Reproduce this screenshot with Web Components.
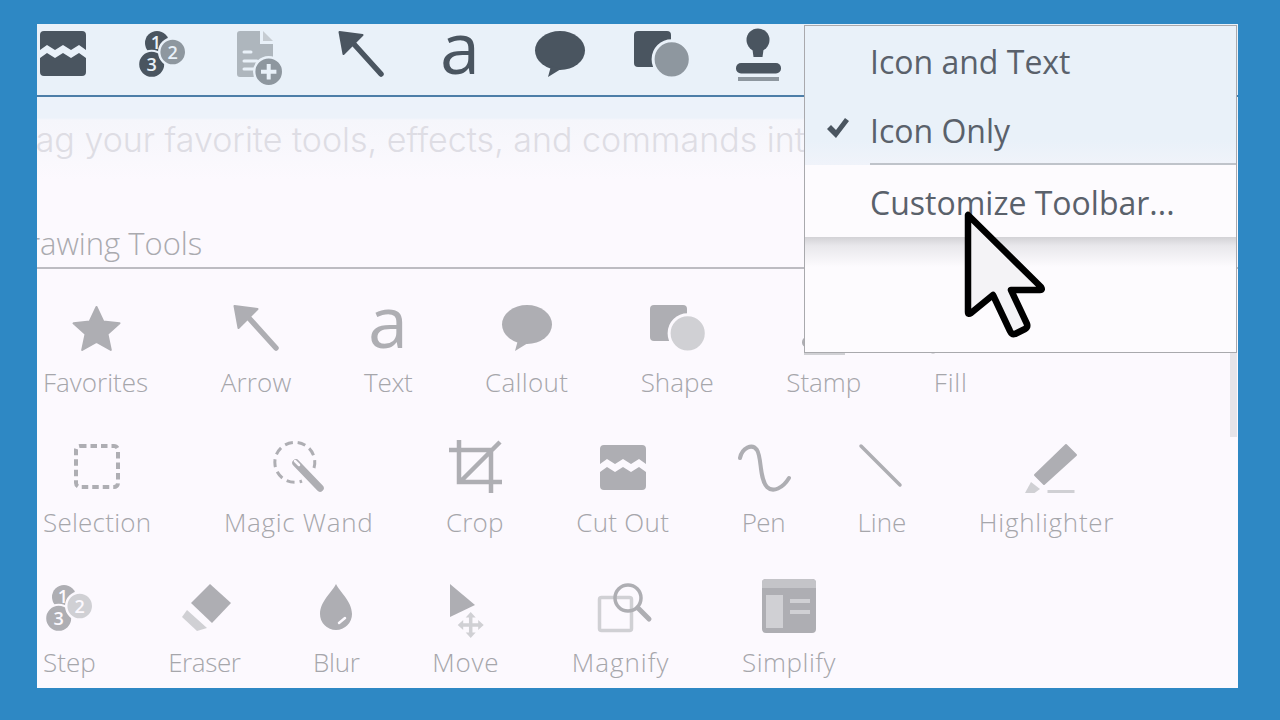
<!DOCTYPE html>
<html>
<head>
<meta charset="utf-8">
<title>Customize Toolbar</title>
<style>
    html, body { margin: 0; padding: 0; background: #2e88c4; }
</style>
</head>
<body>
<app-frame>
    <snag-toolbar>
        <tool-icon name="cutout"></tool-icon>
        <tool-icon name="step"></tool-icon>
        <tool-icon name="doc"></tool-icon>
        <tool-icon name="arrow"></tool-icon>
        <tool-icon name="text"></tool-icon>
        <tool-icon name="callout"></tool-icon>
        <tool-icon name="shape"></tool-icon>
        <tool-icon name="stamp"></tool-icon>
    </snag-toolbar>
    <hint-band>Drag your favorite tools, effects, and commands into the toolbar</hint-band>
    <section-title>Drawing Tools</section-title>
    <tool-row>
        <tool-item name="star">Favorites</tool-item>
        <tool-item name="arrow" track="0.2">Arrow</tool-item>
        <tool-item name="text" track="-0.25">Text</tool-item>
        <tool-item name="callout" track="0.3">Callout</tool-item>
        <tool-item name="shape">Shape</tool-item>
        <tool-item name="stamp">Stamp</tool-item>
        <tool-item name="fill" track="0.8">Fill</tool-item>
    </tool-row>
    <tool-row>
        <tool-item name="selection" track="0.25">Selection</tool-item>
        <tool-item name="wand" track="0.7">Magic Wand</tool-item>
        <tool-item name="crop" track="0.2">Crop</tool-item>
        <tool-item name="cutout" track="0.3">Cut Out</tool-item>
        <tool-item name="pen" track="-0.5">Pen</tool-item>
        <tool-item name="line">Line</tool-item>
        <tool-item name="highlighter" track="0.75">Highlighter</tool-item>
    </tool-row>
    <tool-row>
        <tool-item name="step">Step</tool-item>
        <tool-item name="eraser" track="-0.4">Eraser</tool-item>
        <tool-item name="blur" track="-0.25">Blur</tool-item>
        <tool-item name="move" track="0.8">Move</tool-item>
        <tool-item name="magnify" track="1">Magnify</tool-item>
        <tool-item name="simplify" track="0.5">Simplify</tool-item>
    </tool-row>
    <context-menu slot="overlay"></context-menu>
    <mouse-cursor slot="overlay"></mouse-cursor>
</app-frame>

<script>
// every icon is drawn on a 60x60 box, centred on its column
const ICONS = {
    cutout: `<path fill="var(--ink)" d="M7 11a4 4 0 0 1 4-4h38a4 4 0 0 1 4 4v15l-7-5-8 5-8-5-8 5-8-5-7 5z"/>
             <path fill="var(--ink)" d="M7 34l7-5 8 5 8-5 8 5 8-5 7 5v14a4 4 0 0 1-4 4H11a4 4 0 0 1-4-4z"/>`,
    step: `<circle cx="25" cy="19" r="12" fill="var(--ink)"/>
           <text x="24" y="25" class="num" fill="var(--bg)">1</text>
           <circle cx="19.7" cy="40.3" r="13.500" fill="var(--ink)" stroke="var(--bg)" stroke-width="2"/>
           <circle cx="40.7" cy="28" r="13.500" fill="var(--ink2)" stroke="var(--bg)" stroke-width="2.400"/>
           <text x="40.700" y="34.500" class="num" fill="var(--bg)">2</text>
           <text x="19.700" y="47" class="num" fill="var(--bg)">3</text>`,
    doc: `<path fill="var(--ink3)" d="M10 7h20v13h13v30a3 3 0 0 1-3 3H10a3 3 0 0 1-3-3V10a3 3 0 0 1 3-3z"/>
          <path fill="var(--ink4)" d="M33 7l10 10H33z"/>
          <path stroke="var(--bg)" stroke-width="3" stroke-linecap="round" d="M14 28h7M14 37h13M14 45h12"/>
          <circle cx="38.7" cy="47.7" r="14.500" fill="var(--ink2)" stroke="var(--bg)" stroke-width="2.400"/>
          <path stroke="var(--bg)" stroke-width="4" d="M38.700 40v15.400M31 47.700h15.400"/>`,
    arrow: `<path stroke="var(--ink)" stroke-width="5.500" stroke-linecap="round" d="M22 19l28 31"/>
            <path fill="var(--ink)" stroke="var(--ink)" stroke-width="2" stroke-linejoin="round" d="M8.500 8l23 3-19 19z"/>`,
    text: `<text x="30" y="50" class="glyph" fill="var(--ink)">a</text>`,
    callout: `<ellipse cx="30" cy="26.500" rx="25" ry="19.500" fill="var(--ink)"/>
              <path fill="var(--ink)" d="M21 42l-3 11 13-8z"/>`,
    shape: `<rect x="3" y="7" width="37" height="36" rx="4" fill="var(--ink)"/>
            <circle cx="40.7" cy="35.3" r="18.600" fill="var(--ink2)" stroke="var(--bg)" stroke-width="3"/>`,
    stamp: `<circle cx="30" cy="16" r="11.500" fill="var(--ink)"/>
            <path fill="var(--ink)" d="M24 22h12l-1.500 11h-9z"/>
            <rect x="8" y="39" width="45" height="10.500" rx="5" fill="var(--ink)"/>
            <rect x="10" y="53" width="41" height="4" fill="var(--ink2)"/>`,
    star: `<path fill="var(--ink)" stroke="var(--ink)" stroke-width="2" stroke-linejoin="round" d="M30.500 9l6.800 14.500 16.200 1.800-12 10.800 3.300 15.900-14.300-8-14.300 8 3.300-15.900-12-10.800 16.200-1.800z"/>`,
    fill: `<path fill="var(--ink)" d="M30 20l17 17-14 13-17-17z"/>
           <circle cx="12" cy="52" r="3.500" fill="var(--ink)"/>`,
    selection: `<rect x="9" y="8" width="42" height="41" rx="4" fill="none" stroke="var(--ink)" stroke-width="4" stroke-dasharray="6.500 4"/>`,
    wand: `<path fill="none" stroke="var(--ink)" stroke-width="3" stroke-dasharray="8 5" d="M45 30A20 20 0 1 0 33 43"/>
           <path stroke="var(--ink)" stroke-width="7.500" stroke-linecap="round" d="M27 25l24 25"/>
           <path stroke="var(--bg)" stroke-width="2.500" stroke-linecap="round" d="M26 23l4 4"/>`,
    crop: `<path fill="none" stroke="var(--ink)" stroke-width="4.500" d="M14 2v42h43M4 12h42v43M55 4L15 44"/>`,
    pen: `<path fill="none" stroke="var(--ink)" stroke-width="4" stroke-linecap="round" d="M7 20c2-10 12-15 17-8 5 8 2 28 10 37 6 6 16 1 22-9"/>`,
    line: `<path stroke="var(--ink)" stroke-width="3.500" stroke-linecap="round" d="M9 8l39 39"/>`,
    highlighter: `<path fill="var(--ink)" stroke="var(--ink)" stroke-width="2" stroke-linejoin="round" d="M49 7l10 10-32 29-9-9z"/>
                  <path fill="var(--ink2)" d="M14 44l9 7-5.500 4H8z"/>
                  <rect x="30.500" y="52" width="27" height="3" fill="var(--ink2)"/>`,
    eraser: `<path fill="var(--ink)" d="M36 6l21 19-19 20-21-20z"/>
             <path fill="var(--ink2)" d="M13 32l20 18-10 3-15-14z"/>`,
    blur: `<path fill="var(--ink)" d="M30 6c3 7 16 17 16 30a16 16 0 0 1-32 0c0-13 13-23 16-30z"/>
           <path stroke="var(--bg)" stroke-width="2.500" stroke-linecap="round" d="M33 45l6-5"/>`,
    move: `<path fill="var(--ink)" d="M14 6l25 21-25 12z"/>
           <path stroke="var(--ink2)" stroke-width="3.500" d="M34.700 38v18M25.700 47h18"/>
           <path fill="var(--ink2)" d="M34.700 34l5 5.500h-10zM34.700 60l5-5.500h-10zM21.700 47l5.500-5v10zM47.700 47l-5.500-5v10z"/>`,
    magnify: `<rect x="8.500" y="19.500" width="32" height="33" rx="2" fill="none" stroke="var(--ink2)" stroke-width="3.500"/>
              <circle cx="37" cy="20" r="13" fill="none" stroke="var(--ink)" stroke-width="3.500"/>
              <path stroke="var(--ink)" stroke-width="5" stroke-linecap="round" d="M47 30l11 11"/>`,
    simplify: `<rect x="3" y="1" width="54" height="54" rx="4" fill="var(--ink)"/>
               <path fill="var(--ink4)" d="M7 1h46a4 4 0 0 1 4 4v5H3V5a4 4 0 0 1 4-4z"/>
               <rect x="7" y="17" width="17" height="33" fill="var(--ink2)"/>
               <rect x="31" y="21" width="20" height="4" fill="var(--ink2)"/>
               <rect x="31" y="32" width="20" height="4" fill="var(--ink2)"/>`
};

class ToolIcon extends HTMLElement {
    connectedCallback() {
        const name = this.getAttribute('name');
        this.attachShadow({ mode: 'open' });
        this.shadowRoot.innerHTML = `
            <style>
                :host { display: block; width: 60px; height: 60px; flex: none; }
                svg { display: block; overflow: visible; }
                .num { font: 600 18px "Open Sans", sans-serif; text-anchor: middle; }
                .glyph { font: 400 72px "Open Sans", sans-serif; text-anchor: middle; }
            </style>
            <svg width="60" height="60" viewBox="0 0 60 60">${ICONS[name]}</svg>
        `;
    }
}

class AppFrame extends HTMLElement {
    constructor() {
        super();
        this.attachShadow({ mode: 'open' });
        this.shadowRoot.innerHTML = `
            <style>
                :host { display: block; width: 1280px; height: 720px; padding: 24px 42px 32px 37px; box-sizing: border-box; background: #2e88c4; }
                .window {
                    position: relative;
                    height: 100%;
                    overflow: hidden;
                    background: #fcf9fe;
                    --ink: #aeaeb3;
                    --ink2: #d0d0d4;
                    --ink3: #aeaeb3;
                    --ink4: #c4c4c8;
                    --bg: #fcf9fe;
                }
                .scrollbar { position: absolute; right: 1px; top: 326px; width: 7px; height: 87px; background: #e6e4e9; }
            </style>
            <div class="window">
                <slot></slot>
                <div class="scrollbar"></div>
                <slot name="overlay"></slot>
            </div>
        `;
    }
}

class SnagToolbar extends HTMLElement {
    constructor() {
        super();
        this.attachShadow({ mode: 'open' });
        this.shadowRoot.innerHTML = `
            <style>
                :host {
                    display: flex;
                    gap: 39px;
                    height: 71px;
                    margin-left: -4px;
                    border-bottom: 2px solid #4d7ea8;
                    background: #e9f1f9;
                    --ink: #4a5560;
                    --ink2: #8e979f;
                    --ink3: #aeb6bd;
                    --ink4: #c6ccd2;
                    --bg: #e9f1f9;
                }
                ::slotted(:nth-child(3)) { margin-left: -1px; }
                ::slotted(:nth-child(4)) { margin-left: 2px; }
                ::slotted(:nth-child(6)) { margin-left: 1px; }
                ::slotted(:nth-child(7)) { margin-left: 2px; }
                ::slotted(:nth-child(8)) { margin-left: -2px; }
            </style>
            <slot></slot>
        `;
    }
}

class HintBand extends HTMLElement {
    constructor() {
        super();
        this.attachShadow({ mode: 'open' });
        this.shadowRoot.innerHTML = `
            <style>
                :host {
                    display: block;
                    height: 83px;
                    padding-top: 24px;
                    box-sizing: border-box;
                    overflow: hidden;
                    white-space: nowrap;
                    background: linear-gradient(#ecf2fa 0, #ecf2fa 21px, #f5f6fb 23px, #fcf9fe 100%);
                    color: #dedde4;
                    font: 300 34px/38px Inter, sans-serif;
                    text-indent: -38px;
                }
                .clip { width: 767px; overflow: hidden; }
            </style>
            <div class="clip"><slot></slot></div>
        `;
    }
}

class SectionTitle extends HTMLElement {
    constructor() {
        super();
        this.attachShadow({ mode: 'open' });
        this.shadowRoot.innerHTML = `
            <style>
                :host {
                    display: block;
                    height: 89px;
                    box-sizing: border-box;
                    padding-top: 45px;
                    border-bottom: 2px solid #bdbcc2;
                    color: #aaaaaf;
                    font: 300 31px/36px "Open Sans", sans-serif;
                    text-indent: -31px;
                    white-space: nowrap;
                }
            </style>
            <slot></slot>
        `;
    }
}

class ToolRow extends HTMLElement {
    constructor() {
        super();
        this.attachShadow({ mode: 'open' });
        this.shadowRoot.innerHTML = `
            <style>
                :host { display: flex; gap: 72.500px; height: 140px; padding-left: 6px; padding-top: 29px; box-sizing: border-box; }
            </style>
            <slot></slot>
        `;
    }
}

class ToolItem extends HTMLElement {
    constructor() {
        super();
        this.attachShadow({ mode: 'open' });
    }

    connectedCallback() {
        const track = this.getAttribute('track') || 0;
        this.shadowRoot.innerHTML = `
            <style>
                :host { display: flex; flex-direction: column; align-items: center; flex: none; }
                .icon { width: 0; height: 60px; display: flex; justify-content: center; margin-bottom: 7px; }
                .label { color: #a6a6ab; font: 300 26px/34px "Open Sans", sans-serif; white-space: nowrap; letter-spacing: ${track}px; }
            </style>
            <div class="icon"><tool-icon name="${this.getAttribute('name')}"></tool-icon></div>
            <div class="label"><slot></slot></div>
        `;
    }
}

class ContextMenu extends HTMLElement {
    constructor() {
        super();
        this.attachShadow({ mode: 'open' });
        this.shadowRoot.innerHTML = `
            <style>
                :host {
                    position: absolute;
                    left: 767px;
                    top: 1px;
                    width: 433px;
                    height: 328px;
                    box-sizing: border-box;
                    border: 1px solid #a9a9ad;
                    background: #fdfbfe;
                    color: #5a616b;
                    font: 400 32px/40px "Open Sans", sans-serif;
                }
                .top { background: linear-gradient(#e9f1f9 82%, #f0f3fa); height: 139px; padding-top: 16px; box-sizing: border-box; }
                .item { height: 69px; padding-left: 65px; position: relative; white-space: nowrap; }
                .check { position: absolute; left: 21px; top: 5px; }
                .rule { height: 2px; margin-left: 65px; margin-top: -2px; background: #bfc3ca; }
                .bottom { height: 72px; padding-top: 18px; box-sizing: border-box; }
                .shadow { height: 30px; background: linear-gradient(#d3d2d6, #e9e8ec 30%, #fdfbfe); }
            </style>
            <div class="top">
                <div class="item">Icon and Text</div>
                <div class="item">
                    <svg class="check" width="24" height="24" viewBox="0 0 24 24"><path fill="#4a5560" d="M1 13l4-4 5 5L19 2l4 3-13 17z"/></svg>
                    Icon Only
                </div>
            </div>
            <div class="rule"></div>
            <div class="bottom"><div class="item">Customize Toolbar...</div></div>
            <div class="shadow"></div>
        `;
    }
}

class MouseCursor extends HTMLElement {
    constructor() {
        super();
        this.attachShadow({ mode: 'open' });
        this.shadowRoot.innerHTML = `
            <style>
                :host { position: absolute; left: 920px; top: 180px; width: 100px; height: 140px; }
            </style>
            <svg width="100" height="140" viewBox="0 0 100 140">
                <path fill="#f4f3f6" stroke="#000" stroke-width="6.500" stroke-linejoin="round"
                      d="M11 11v97q0 3 3 1l22-18 17 36q2 4 5 3l10-5q3-2 2-5l-16-34h29q3 0 1-3z"/>
            </svg>
        `;
    }
}

customElements.define('tool-icon', ToolIcon);
customElements.define('app-frame', AppFrame);
customElements.define('snag-toolbar', SnagToolbar);
customElements.define('hint-band', HintBand);
customElements.define('section-title', SectionTitle);
customElements.define('tool-row', ToolRow);
customElements.define('tool-item', ToolItem);
customElements.define('context-menu', ContextMenu);
customElements.define('mouse-cursor', MouseCursor);
</script>
</body>
</html>
